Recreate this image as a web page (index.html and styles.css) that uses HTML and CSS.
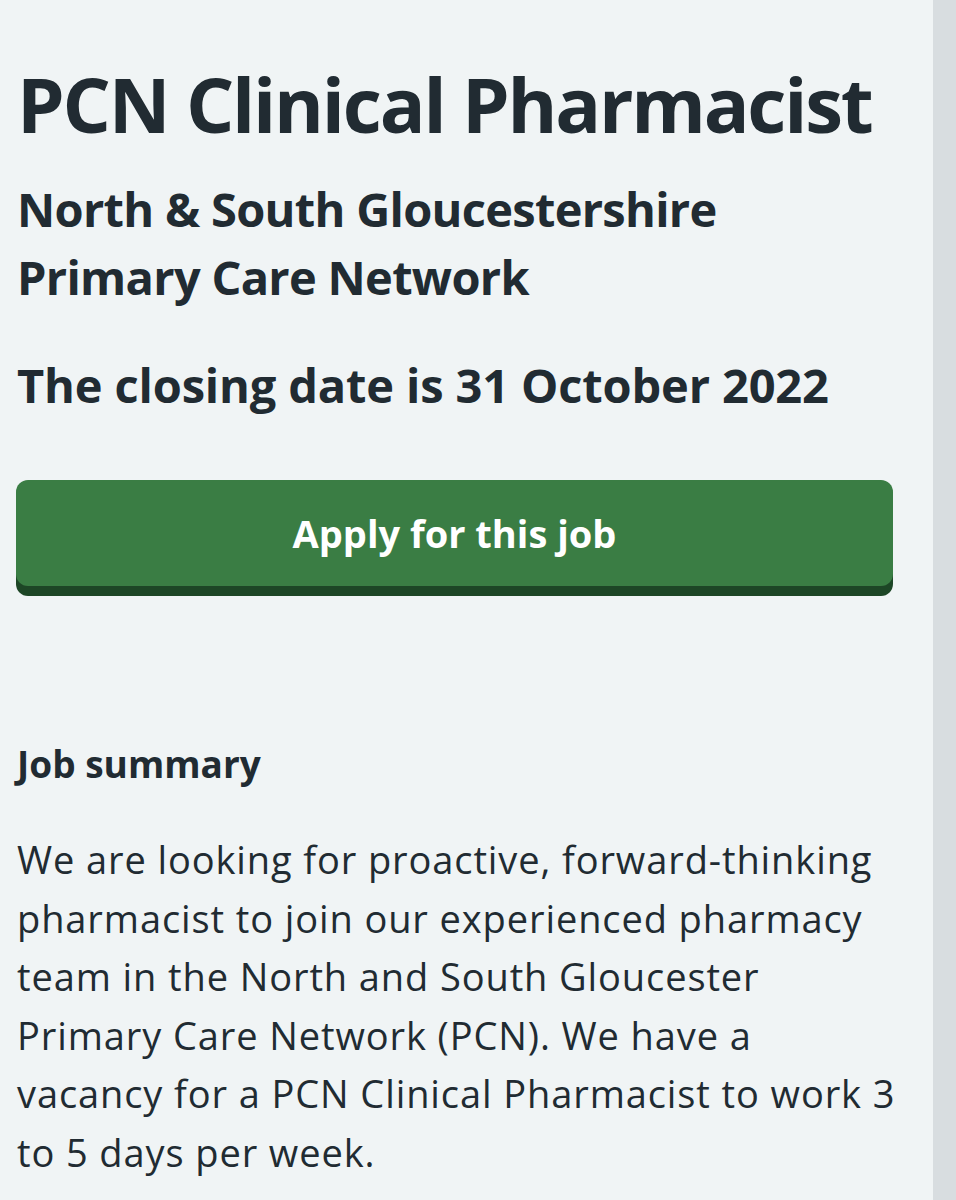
FILE: index.html
```html
<!DOCTYPE html>
<html lang="en">
<head>
<meta charset="utf-8">
<title>PCN Clinical Pharmacist</title>
<link rel="stylesheet" href="styles.css">
</head>
<body>
<div class="page">
  <main class="content">
    <h1 class="title">PCN Clinical Pharmacist</h1>
    <h2 class="employer">North &amp; South Gloucestershire Primary Care Network</h2>
    <h2 class="closing">The closing date is 31 October 2022</h2>
    <a class="apply" href="#">Apply for this job</a>
    <h3 class="section-title">Job summary</h3>
    <p class="summary">We are looking for proactive, forward-thinking pharmacist to join our experienced pharmacy team in the North and South Gloucester Primary Care Network (PCN). We have a vacancy for a PCN Clinical Pharmacist to work 3 to 5 days per week.</p>
  </main>
  <div class="gutter"></div>
</div>
</body>
</html>
```

FILE: styles.css
```css
html, body {
  margin: 0;
  padding: 0;
}
body {
  background: #f0f4f5;
  color: #212b32;
  font-family: "Open Sans", "Noto Sans", sans-serif;
}
.page {
  display: flex;
  min-height: 1200px;
}
.content {
  width: 933px;
  box-sizing: border-box;
  padding: 0 40px 0 17px;
  flex: none;
}
.gutter {
  flex: 1;
  background: #d8dde0;
}
.title {
  margin: 58px 0 0;
  font-size: 76px;
  line-height: 92px;
  font-weight: 700;
  letter-spacing: -2.2px;
  white-space: nowrap;
}
.employer {
  margin: 25px 0 0;
  font-size: 47px;
  line-height: 68px;
  font-weight: 700;
  letter-spacing: -0.7px;
  width: 740px;
}
.closing {
  margin: 40px 0 0;
  font-size: 47px;
  line-height: 68px;
  font-weight: 700;
  letter-spacing: -0.15px;
}
.apply {
  display: flex;
  justify-content: center;
  align-items: center;
  margin: 61px 0 0 -1px;
  height: 106px;
  width: 877px;
  background: #3a7d44;
  border-radius: 12px;
  box-shadow: 0 10px 0 #1d4626;
  color: #ffffff;
  text-decoration: none;
  font-size: 38px;
  font-weight: 700;
}
.section-title {
  margin: 150px 0 0;
  font-size: 37px;
  line-height: 56px;
  font-weight: 700;
}
.summary {
  margin: 38px -14px 0 0;
  font-size: 38px;
  line-height: 58.6px;
  font-weight: 400;
  letter-spacing: 0.9px;
}
```
